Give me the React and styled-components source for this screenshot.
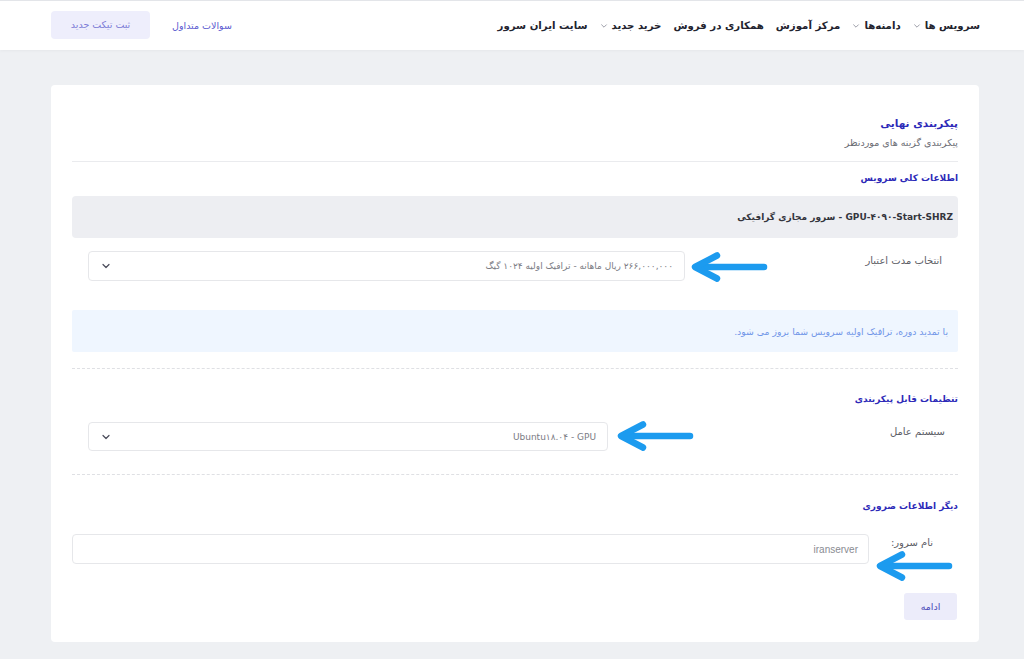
import React from "react";
import styled, { createGlobalStyle } from "styled-components";

const Global = createGlobalStyle`
  html, body { margin: 0; padding: 0; }
  body {
    background: #eef0f3;
    font-family: "DejaVu Sans", "Noto Sans", sans-serif;
    direction: rtl;
  }
  * { box-sizing: border-box; }
`;

const Page = styled.div`
  min-height: 659px;
  background: #eef0f3;
  border-top: 1px solid #e4e6ea;
`;

const Header = styled.header`
  height: 49px;
  background: #fff;
  box-shadow: 0 1px 3px rgba(0, 0, 0, 0.04);
`;

const HeaderInner = styled.div`
  margin: 0 45px 0 51px;
  height: 100%;
  display: flex;
  align-items: center;
  justify-content: space-between;
`;

const Nav = styled.nav`
  display: flex;
  align-items: center;
  gap: 12px;
  margin-right: -1px;
`;

const NavItem = styled.a`
  display: flex;
  align-items: center;
  gap: 4px;
  font-size: 10.2px;
  font-weight: bold;
  color: #22232e;
  white-space: nowrap;
`;

const Chevron = ({ size = 8, color = "#9a9ca6" }) => (
  <svg width={size} height={size} viewBox="0 0 10 10">
    <path d="M2 3.5 L5 6.5 L8 3.5" fill="none" stroke={color} strokeWidth="1.2" strokeLinecap="round" strokeLinejoin="round" />
  </svg>
);

const HeaderActions = styled.div`
  display: flex;
  align-items: center;
  gap: 22px;
`;

const FaqLink = styled.a`
  font-size: 9.5px;
  color: #5b5bd0;
`;

const TicketButton = styled.button`
  width: 99px;
  height: 28px;
  border: none;
  border-radius: 4px;
  background: #eeeefc;
  color: #7b7bd6;
  font-family: inherit;
  font-size: 9.5px;
  margin-bottom: 2px;
`;

const Card = styled.main`
  margin: 35px 45px 0 51px;
  background: #fff;
  border-radius: 4px;
  padding: 29px 21px 22px;
`;

const Title = styled.h1`
  margin: 0;
  font-size: 10.5px;
  line-height: 18px;
  font-weight: bold;
  color: #2d2ab8;
`;

const Subtitle = styled.p`
  margin: 2px 0 0;
  font-size: 9.5px;
  line-height: 18px;
  color: #6a6b73;
`;

const Divider = styled.hr`
  margin: ${(p) => p.$mt}px 0 0;
  border: none;
  border-top: 1px ${(p) => (p.$dashed ? "dashed" : "solid")} ${(p) => (p.$dashed ? "#dfe0e4" : "#eaebee")};
  height: 0;
`;

const SectionHead = styled.h2`
  margin: ${(p) => p.$mt}px 0 0;
  font-size: 9px;
  line-height: 16px;
  font-weight: bold;
  color: #2d2ab8;
`;

const ServiceBox = styled.div`
  margin-top: 10px;
  height: 42px;
  background: #edeef2;
  border-radius: 4px;
  display: flex;
  align-items: center;
  padding-right: 5px;
  font-size: 9px;
  font-weight: bold;
  color: #34353d;
`;

const Row = styled.div`
  margin-top: ${(p) => p.$mt}px;
  display: flex;
  justify-content: space-between;
  align-items: flex-start;
  padding-right: ${(p) => p.$pr}px;
  padding-left: ${(p) => p.$pl}px;
`;

const Label = styled.label`
  font-size: 10px;
  color: #5d5e66;
  padding-top: ${(p) => p.$pt || 0}px;
`;

const FieldWrap = styled.div`
  position: relative;
  width: ${(p) => p.$w}px;
`;

const SelectBox = styled.div`
  height: ${(p) => p.$h}px;
  border: 1px solid #e6e7ea;
  border-radius: 4px;
  background: #fff;
  display: flex;
  align-items: center;
  justify-content: space-between;
  padding: 0 11px 0 12px;
  font-size: 9px;
  color: #7b7c84;
`;

const InputBox = styled.div`
  height: 30px;
  border: 1px solid #e6e7ea;
  border-radius: 4px;
  background: #fff;
  display: flex;
  align-items: center;
  padding: 0 10px;
  font-family: "Liberation Sans", sans-serif;
  font-size: 10px;
  color: #8a8b92;
`;

const ArrowMark = styled.svg`
  position: absolute;
  left: calc(100% + ${(p) => p.$dx}px);
  top: ${(p) => p.$dy}px;
`;

const Arrow = ({ dx, dy }) => (
  <ArrowMark $dx={dx} $dy={dy} width="80" height="30" viewBox="0 0 80 30">
    <path d="M75 15 H9" stroke="#1c9bef" strokeWidth="6.5" strokeLinecap="round" fill="none" />
    <path d="M28 3.5 L6 15 L28 26.5" stroke="#1c9bef" strokeWidth="6.5" strokeLinecap="round" strokeLinejoin="round" fill="none" />
  </ArrowMark>
);

const InfoBox = styled.div`
  margin-top: 29px;
  height: 42px;
  background: #eff6ff;
  border-radius: 2px;
  display: flex;
  align-items: center;
  padding-right: 10px;
  font-size: 9.3px;
  color: #6f95e8;
`;

const ButtonRow = styled.div`
  margin-top: 29px;
  display: flex;
`;

const ContinueButton = styled.button`
  width: 53px;
  height: 27px;
  margin-right: 1px;
  border: none;
  border-radius: 3px;
  background: #ececfa;
  color: #4b4bb8;
  font-family: inherit;
  font-size: 9.5px;
`;

const navItems = [
  { t: "سرویس ها", c: true },
  { t: "دامنه‌ها", c: true },
  { t: "مرکز آموزش" },
  { t: "همکاری در فروش" },
  { t: "خرید جدید", c: true },
  { t: "سایت ایران سرور" },
];

export default function App() {
  return (
    <Page>
      <Global />
      <Header>
        <HeaderInner>
          <Nav>
            {navItems.map((n) => (
              <NavItem key={n.t}>
                {n.t}
                {n.c && <Chevron />}
              </NavItem>
            ))}
          </Nav>
          <HeaderActions>
            <FaqLink>سوالات متداول</FaqLink>
            <TicketButton>ثبت تیکت جدید</TicketButton>
          </HeaderActions>
        </HeaderInner>
      </Header>

      <Card>
        <Title>پیکربندی نهایی</Title>
        <Subtitle>پیکربندی گزینه های موردنظر</Subtitle>
        <Divider $mt={9} />

        <SectionHead $mt={8}>اطلاعات کلی سرویس</SectionHead>
        <ServiceBox>GPU-۴۰۹۰-Start-SHRZ - سرور مجازی گرافیکی</ServiceBox>

        <Row $mt={13} $pr={16} $pl={16}>
          <Label $pt={4}>انتخاب مدت اعتبار</Label>
          <FieldWrap $w={597}>
            <SelectBox $h={30}>
              <span>۲۶۶,۰۰۰,۰۰۰ ریال ماهانه - ترافیک اولیه ۱۰۲۴ گیگ</span>
              <Chevron size={10} color="#4a4c5a" />
            </SelectBox>
            <Arrow dx={4} dy={1} />
          </FieldWrap>
        </Row>

        <InfoBox>با تمدید دوره، ترافیک اولیه سرویس شما بروز می شود.</InfoBox>

        <Divider $mt={16} $dashed />

        <SectionHead $mt={22}>تنظیمات قابل پیکربندی</SectionHead>
        <Row $mt={15} $pr={13} $pl={16}>
          <Label $pt={4}>سیستم عامل</Label>
          <FieldWrap $w={520}>
            <SelectBox $h={29}>
              <span>Ubuntu۱۸.۰۴ - GPU</span>
              <Chevron size={10} color="#4a4c5a" />
            </SelectBox>
            <Arrow dx={7} dy={-1} />
          </FieldWrap>
        </Row>

        <Divider $mt={23} $dashed />

        <SectionHead $mt={23}>دیگر اطلاعات ضروری</SectionHead>
        <Row $mt={20} $pr={25} $pl={0}>
          <Label $pt={3}>نام سرور:</Label>
          <FieldWrap $w={797}>
            <InputBox>iranserver</InputBox>
            <Arrow dx={5} dy={17} />
          </FieldWrap>
        </Row>

        <ButtonRow>
          <ContinueButton>ادامه</ContinueButton>
        </ButtonRow>
      </Card>
    </Page>
  );
}
